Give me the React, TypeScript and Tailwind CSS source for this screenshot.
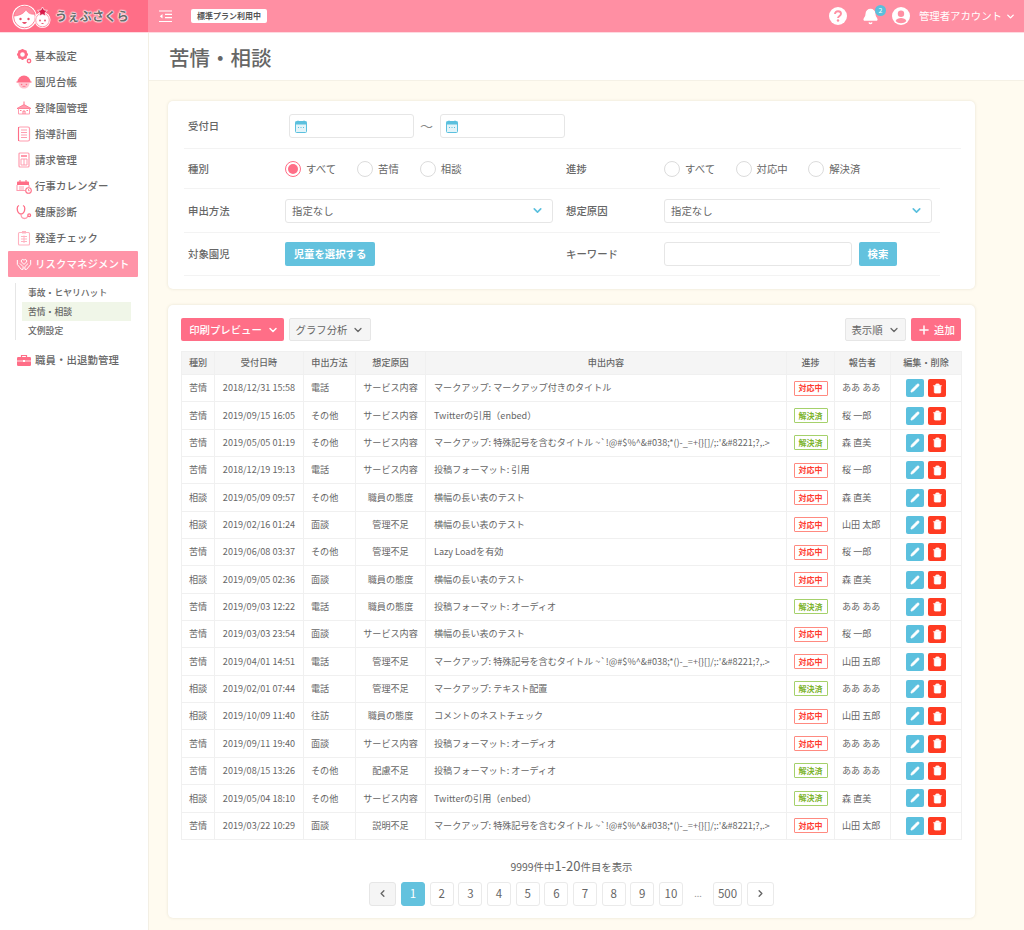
import { ChevronDown, ChevronLeft, ChevronRight, Bell, Pencil, Plus, Trash2 } from "lucide-react";
import type { ReactNode } from "react";

const PINK = "#ff6e87";

// sidebar icons, all drawn on a 16x16 box
const Gear = () => (
  <svg viewBox="0 0 16 16" className="w-4 h-4" fill="none" stroke={PINK}>
    <circle cx="6.5" cy="6.5" r="3.6" strokeWidth="2.6" />
    <path d="M6.5 1v1.5M6.5 10.5V12M1 6.5h1.5M10.5 6.5H12M2.6 2.6l1 1M9.4 9.4l1 1M2.6 10.4l1-1M9.4 3.6l1-1" strokeWidth="1.8" />
    <circle cx="13" cy="13" r="1.7" strokeWidth="1.4" />
  </svg>
);
const Kid = () => (
  <svg viewBox="0 0 16 16" className="w-4 h-4">
    <path d="M1.5 8a6.5 6.5 0 0 1 13 0z" fill={PINK} />
    <path d="M.5 8h15" stroke={PINK} strokeWidth="1.2" />
    <path d="M2.5 9c0 3.5 2.4 5.5 5.5 5.5s5.5-2 5.5-5.5z" fill="#ffc2cd" />
    <circle cx="5.6" cy="10.5" r=".8" fill={PINK} />
    <circle cx="10.4" cy="10.5" r=".8" fill={PINK} />
    <path d="M6.5 12.4h3" stroke={PINK} strokeWidth=".8" />
  </svg>
);
const School = () => (
  <svg viewBox="0 0 16 16" className="w-4 h-4" fill="none" stroke={PINK}>
    <path d="M8 1.5v3" strokeWidth="1" />
    <path d="M1 8.5 8 4.5l7 4z" fill="#ff9db0" strokeWidth=".8" />
    <path d="M2.5 8.5v5.5h11V8.5" stroke="#ff9db0" strokeWidth="1" />
    <path d="M7 14v-3h2v3M4 10.5h1.5M10.5 10.5H12" stroke={PINK} strokeWidth=".9" />
  </svg>
);
const Note = () => (
  <svg viewBox="0 0 16 16" className="w-4 h-4" fill="none" stroke="#ff9db0">
    <rect x="2.5" y="1" width="11" height="14" rx="1.5" strokeWidth="1.2" />
    <path d="M5 4h6M5 6.5h6M5 9h6M5 11.5h6" strokeWidth="1" />
    <path d="M2.5 1v14" stroke={PINK} strokeWidth="1" />
  </svg>
);
const Calc = () => (
  <svg viewBox="0 0 16 16" className="w-4 h-4" fill="none" stroke="#ff9db0">
    <rect x="3" y="1" width="10" height="14" rx="1" strokeWidth="1.2" />
    <path d="M5 4h6" stroke={PINK} strokeWidth="1.4" />
    <path d="M5 7h6M5 7v6M8 7v6M11 7v6M5 13h6" strokeWidth="1" />
  </svg>
);
const Cal = () => (
  <svg viewBox="0 0 16 16" className="w-4 h-4" fill="none" stroke="#ff9db0">
    <path d="M1 4.5a1 1 0 0 1 1-1h10a1 1 0 0 1 1 1V7H1z" fill={PINK} stroke="none" />
    <path d="M1 7v5.5h8M13 7v2" strokeWidth="1.1" />
    <path d="M4 2v2.500M10 2v2.500" stroke={PINK} strokeWidth="1.1" />
    <path d="M3 9h5M3 11h5" strokeWidth="1" />
    <circle cx="12.500" cy="12.500" r="2.800" stroke={PINK} strokeWidth="1.100" />
    <path d="M12.500 11v1.700h1.200" stroke={PINK} strokeWidth=".8" />
  </svg>
);
const Stetho = () => (
  <svg viewBox="0 0 16 16" className="w-4 h-4" fill="none" stroke={PINK} strokeWidth="1.300">
    <path d="M3 1.500c-1.300.5-1.800 1.500-1.800 3 0 3.500 2 5.500 3.800 5.500s3.800-2 3.800-5.500c0-1.500-.5-2.500-1.800-3" />
    <path d="M5 10c0 2.500 1 4.500 3.500 4.500S11.500 13 12 12" stroke="#ff9db0" />
    <circle cx="13.200" cy="11.200" r="1.400" />
  </svg>
);
const Check = () => (
  <svg viewBox="0 0 16 16" className="w-4 h-4" fill="none" stroke="#ffb3c1">
    <rect x="2.500" y="2.500" width="11" height="12.500" rx="1" strokeWidth="1.100" />
    <rect x="6" y="1" width="4" height="2.500" fill="#ffb3c1" stroke="none" />
    <path d="M5 6.500h6M5 9h6M5 11.500h6M8 5.500v7.500" strokeWidth="1" />
  </svg>
);
const Hands = () => (
  <svg viewBox="0 0 18 16" className="w-[18px] h-4" fill="none" stroke="#fff" strokeWidth="1.100">
    <path d="M9 8.500 6.300 5.800a1.700 1.700 0 0 1 2.400-2.400l.3.300.3-.3a1.700 1.700 0 0 1 2.400 2.400z" />
    <path d="M1.500 3.500v5l4.500 5.500h2V11L4.500 7.500M16.500 3.500v5L12 14h-2v-3l3.500-3.500" />
  </svg>
);
const Case = () => (
  <svg viewBox="0 0 16 16" className="w-4 h-4">
    <path d="M5.500 5V3.500h5V5" fill="none" stroke={PINK} strokeWidth="1.200" />
    <rect x="1" y="5" width="14" height="9" rx="1.200" fill={PINK} />
    <path d="M1 9h14" stroke="#fff" strokeWidth=".8" />
    <rect x="7" y="8" width="2" height="2" fill="#fff" />
  </svg>
);

const Logo = () => (
  <svg viewBox="0 0 39 27" className="w-[39px] h-[27px]">
    <circle cx="12.500" cy="14" r="12.300" fill="#fff" />
    <circle cx="12.500" cy="14" r="10.800" fill="#fff" stroke="#ff6e87" strokeWidth=".9" />
    <path d="M2 13C3 7 7 3.500 12.500 3.200 17.500 3.200 21.500 6.500 23 11c-4 .8-7.500-1-9-4.500C12.500 10 8 12.500 2 13z" fill="#ff8fa3" stroke="#ff6e87" strokeWidth=".7" />
    <circle cx="8.500" cy="16" r="1.200" fill="#e8506c" />
    <circle cx="16.500" cy="16" r="1.200" fill="#e8506c" />
    <path d="M10 19c1.400 2.500 3.600 2.500 5 0z" fill="#e8506c" />
    <circle cx="30.500" cy="17" r="8" fill="#fff" />
    <circle cx="30.500" cy="17" r="6.800" fill="#fff" stroke="#ff8fa3" strokeWidth=".9" />
    <circle cx="28" cy="17.500" r=".9" fill="#e8506c" />
    <circle cx="33" cy="17.500" r=".9" fill="#e8506c" />
    <path d="M29 20c1 1.200 2 1.200 3 0z" fill="#e8506c" />
    <path d="M30.500 4l1.600 3 3.300.4-2.400 2.300.6 3.300-3.100-1.600-3.100 1.600.6-3.300-2.400-2.300 3.300-.4z" fill="#d81b4a" stroke="#fff" strokeWidth=".7" />
  </svg>
);

const MenuToggle = () => (
  <svg viewBox="0 0 13 13" className="w-[13px] h-[13px]" fill="none" stroke="#fff" strokeWidth="1.200">
    <path d="M0 1h13M6 4.300h7M6 7.700h7M0 11.500h13" />
    <path d="M3.500 4 .8 6.200 3.500 8.400z" fill="#fff" stroke="none" />
  </svg>
);

const HelpIcon = () => (
  <svg viewBox="0 0 18 18" className="w-[18px] h-[18px]">
    <circle cx="9" cy="9" r="9" fill="#fff" />
    <path d="M6 7c0-1.800 1.300-2.800 3-2.800s3 1 3 2.500c0 2.200-3 2.200-3 4.300" fill="none" stroke="#ff8fa3" strokeWidth="1.900" />
    <circle cx="9" cy="13.500" r="1.200" fill="#ff8fa3" />
  </svg>
);

const UserIcon = () => (
  <svg viewBox="0 0 18 18" className="w-[18px] h-[18px]">
    <circle cx="9" cy="9" r="9" fill="#fff" />
    <circle cx="9" cy="6.800" r="3.200" fill="#ff8fa3" />
    <path d="M3.600 14c1-2 3-2.900 5.400-2.900s4.400.9 5.400 2.900C13 15.500 11.200 16.200 9 16.200S5 15.500 3.600 14z" fill="#ff8fa3" />
  </svg>
);

const Cell = ({ icon, label, active }: { icon: ReactNode; label: string; active?: boolean }) => (
  <div className={`ml-2 mr-[10px] flex h-[26px] items-center gap-[3px] pl-2 text-[10.400px] font-medium ${active ? "bg-[#ff94a8] text-white rounded-[1px] font-bold" : "text-[#666]"}`}>
    <span className="flex w-4 justify-center">{icon}</span>
    <span className="tracking-[0.1px]">{label}</span>
  </div>
);

const Sidebar = () => (
  <aside className="w-[149px] shrink-0 border-r border-[#f3efe4] bg-white pt-[10px]">
    <Cell icon={<Gear />} label="基本設定" />
    <Cell icon={<Kid />} label="園児台帳" />
    <Cell icon={<School />} label="登降園管理" />
    <Cell icon={<Note />} label="指導計画" />
    <Cell icon={<Calc />} label="請求管理" />
    <Cell icon={<Cal />} label="行事カレンダー" />
    <Cell icon={<Stetho />} label="健康診断" />
    <Cell icon={<Check />} label="発達チェック" />
    <Cell icon={<Hands />} label="リスクマネジメント" active />
    <div className="ml-[15px] mr-[17px] mt-[6px] border-l border-[#e6e6e6] pl-[6px] text-[8.800px] font-medium text-[#666]">
      <div className="flex h-[19px] items-center pl-[6px]">事故・ヒヤリハット</div>
      <div className="flex h-[19px] items-center bg-[#f0f6e8] pl-[6px]">苦情・相談</div>
      <div className="flex h-[19px] items-center pl-[6px]">文例設定</div>
    </div>
    <div className="mt-[7px]">
      <Cell icon={<Case />} label="職員・出退勤管理" />
    </div>
  </aside>
);

const Header = () => (
  <header className="flex h-[33px] border-b border-[#ffd9e0] bg-[#ff8fa3] text-white">
    <div className="flex w-[148px] items-center gap-[4px] bg-[#ff6e87] pl-[12px]">
      <Logo />
      <span className="text-[12.300px] font-bold text-[#6b6b6b] [text-shadow:0_0_1.5px_#fff,0_0_1.5px_#fff,0_0_1.5px_#fff,0_0_2px_#fff]">うぇぶさくら</span>
    </div>
    <div className="flex flex-1 items-center pl-[11px]">
      <MenuToggle />
      <span className="ml-[19px] rounded-[2px] bg-white px-[6px] py-[1px] text-[8px] font-bold text-[#555]">標準プラン利用中</span>
      <div className="ml-auto flex items-center pr-[8px]">
        <HelpIcon />
        <div className="relative ml-[15px]">
          <Bell size={17} fill="#fff" />
          <span className="absolute -right-[7px] -top-[3px] flex h-[11px] w-[11px] items-center justify-center rounded-full bg-[#5bbfdc] text-[7px]">2</span>
        </div>
        <span className="ml-[13px]"><UserIcon /></span>
        <span className="ml-[9px] text-[10.400px]">管理者アカウント</span>
        <ChevronDown size={11} strokeWidth={3} className="ml-[3px]" />
      </div>
    </div>
  </header>
);

const CalIcon = () => (
  <svg viewBox="0 0 12 13" className="w-[12px] h-[13px]">
    <rect x=".5" y="1.500" width="11" height="11" rx="1" fill="#e3f4f9" stroke="#5bc0de" />
    <rect x=".5" y="1.500" width="11" height="3" fill="#5bc0de" />
    <path d="M3 .5v2M9 .5v2" stroke="#5bc0de" />
    <path d="M3 7.500h1M5.500 7.500h1M8 7.500h1" stroke="#5bc0de" />
  </svg>
);

const DateBox = () => (
  <div className="flex h-[24px] w-[125px] items-center rounded-[3px] border border-[#e6e6e6] pl-[5px]">
    <CalIcon />
  </div>
);

const Radio = ({ label, on }: { label: string; on?: boolean }) => (
  <label className="flex items-center gap-[5px]">
    <span className={`flex h-[16px] w-[16px] items-center justify-center rounded-full border ${on ? "border-[#ff6e87]" : "border-[#dcdcdc]"}`}>
      {on && <span className="h-[10px] w-[10px] rounded-full bg-[#ff6e87]" />}
    </span>
    <span>{label}</span>
  </label>
);

const Sel = ({ w }: { w: string }) => (
  <div className={`flex h-[24px] items-center justify-between rounded-[3px] border border-[#e6e6e6] pl-[6px] pr-[8px] ${w}`}>
    <span className="text-[10.400px]">指定なし</span>
    <ChevronDown size={13} strokeWidth={3} className="text-[#5bc0de]" />
  </div>
);

const Filter = () => (
  <section className="rounded-[5px] bg-white pb-[13px] pl-[16px] pr-[35px] shadow-[0_0_3px_rgba(120,110,80,0.18)] text-[10.400px] text-[#666]">
    <div className="mr-[-21px] flex h-[48px] items-center border-b border-[#f3f3f3] pl-[4px] pt-[3px]">
      <span className="w-[101px] font-medium">受付日</span>
      <DateBox />
      <span className="mx-[6px] w-[14px] text-[13px] text-[#888]">～</span>
      <DateBox />
    </div>
    <div className="flex h-[40px] items-center border-b border-[#f3f3f3] pl-[4px]">
      <span className="w-[97px] font-medium">種別</span>
      <div className="flex w-[281px] gap-[21px]">
        <Radio label="すべて" on />
        <Radio label="苦情" />
        <Radio label="相談" />
      </div>
      <span className="w-[98px] font-medium">進捗</span>
      <div className="flex gap-[20.500px]">
        <Radio label="すべて" />
        <Radio label="対応中" />
        <Radio label="解決済" />
      </div>
    </div>
    <div className="flex h-[44px] items-center border-b border-[#f3f3f3] pl-[4px]">
      <span className="w-[97px] font-medium">申出方法</span>
      <Sel w="w-[268px]" />
      <span className="ml-[13px] w-[98px] font-medium">想定原因</span>
      <Sel w="w-[268px]" />
    </div>
    <div className="flex h-[43px] items-center border-b border-[#f3f3f3] pl-[4px]">
      <span className="w-[97px] font-medium">対象園児</span>
      <button className="h-[24px] w-[90px] rounded-[2px] bg-[#63c2de] font-bold text-white">児童を選択する</button>
      <span className="ml-[191px] w-[98px] font-medium">キーワード</span>
      <div className="h-[24px] w-[188px] rounded-[3px] border border-[#e6e6e6]" />
      <button className="ml-[7px] h-[24px] w-[38px] rounded-[2px] bg-[#63c2de] font-bold text-white">検索</button>
    </div>
  </section>
);

type Row = [string, string, string, string, string, 0 | 1, string];

const SPECIAL = "マークアップ: 特殊記号を含むタイトル ~`!@#$%^&#038;*()-_=+{}[]/;:'&#8221;?,.>";

const rows: Row[] = [
  ["苦情", "2018/12/31 15:58", "電話", "サービス内容", "マークアップ: マークアップ付きのタイトル", 0, "ああ ああ"],
  ["苦情", "2019/09/15 16:05", "その他", "サービス内容", "Twitterの引用（enbed）", 1, "桜 一郎"],
  ["苦情", "2019/05/05 01:19", "その他", "サービス内容", SPECIAL, 1, "森 直美"],
  ["苦情", "2018/12/19 19:13", "電話", "サービス内容", "投稿フォーマット: 引用", 0, "桜 一郎"],
  ["相談", "2019/05/09 09:57", "その他", "職員の態度", "横幅の長い表のテスト", 0, "森 直美"],
  ["相談", "2019/02/16 01:24", "面談", "管理不足", "横幅の長い表のテスト", 0, "山田 太郎"],
  ["苦情", "2019/06/08 03:37", "その他", "管理不足", "Lazy Loadを有効", 0, "桜 一郎"],
  ["相談", "2019/09/05 02:36", "面談", "職員の態度", "横幅の長い表のテスト", 0, "森 直美"],
  ["苦情", "2019/09/03 12:22", "電話", "職員の態度", "投稿フォーマット: オーディオ", 1, "ああ ああ"],
  ["苦情", "2019/03/03 23:54", "面談", "サービス内容", "横幅の長い表のテスト", 0, "桜 一郎"],
  ["苦情", "2019/04/01 14:51", "電話", "管理不足", SPECIAL, 0, "山田 五郎"],
  ["相談", "2019/02/01 07:44", "電話", "管理不足", "マークアップ: テキスト配置", 1, "ああ ああ"],
  ["相談", "2019/10/09 11:40", "往訪", "職員の態度", "コメントのネストチェック", 0, "山田 五郎"],
  ["苦情", "2019/09/11 19:40", "面談", "サービス内容", "投稿フォーマット: オーディオ", 0, "ああ ああ"],
  ["苦情", "2019/08/15 13:26", "その他", "配慮不足", "投稿フォーマット: オーディオ", 1, "ああ ああ"],
  ["相談", "2019/05/04 18:10", "その他", "サービス内容", "Twitterの引用（enbed）", 1, "森 直美"],
  ["苦情", "2019/03/22 10:29", "面談", "説明不足", SPECIAL, 0, "山田 太郎"],
];

const Status = ({ done }: { done: 0 | 1 }) => (
  <span className={`mx-auto flex h-[15px] w-[34px] items-center justify-center rounded-[1px] border text-[8px] font-bold ${done ? "border-[#a5d16b] text-[#7cb32c]" : "border-[#ff8a80] text-[#ff3b30]"}`}>
    {done ? "解決済" : "対応中"}
  </span>
);

const th = "border border-[#f0f0f0] font-medium text-[#666]";
const td = "border border-[#f0f0f0]";

const Table = () => (
  <table className="w-[780px] table-fixed border-collapse text-[9.100px] text-[#666]">
    <colgroup>
      <col className="w-[33px]" />
      <col className="w-[89px]" />
      <col className="w-[52px]" />
      <col className="w-[70px]" />
      <col className="w-[361px]" />
      <col className="w-[48px]" />
      <col className="w-[56px]" />
      <col className="w-[71px]" />
    </colgroup>
    <thead>
      <tr className="h-[23px] bg-[#f5f5f5]">
        <th className={th}>種別</th>
        <th className={th}>受付日時</th>
        <th className={th}>申出方法</th>
        <th className={th}>想定原因</th>
        <th className={th}>申出内容</th>
        <th className={th}>進捗</th>
        <th className={th}>報告者</th>
        <th className={th}>編集・削除</th>
      </tr>
    </thead>
    <tbody>
      {rows.map((r, i) => (
        <tr key={i} className="h-[27.350px]">
          <td className={`${td} text-center`}>{r[0]}</td>
          <td className={`${td} text-center`}>{r[1]}</td>
          <td className={`${td} pl-[7px]`}>{r[2]}</td>
          <td className={`${td} text-center`}>{r[3]}</td>
          <td className={`${td} pl-[8px] whitespace-nowrap`}>{r[4]}</td>
          <td className={td}><Status done={r[5]} /></td>
          <td className={`${td} pl-[7px]`}>{r[6]}</td>
          <td className={td}>
            <div className="flex justify-center gap-[4px]">
              <span className="flex h-[18px] w-[18px] items-center justify-center rounded-[2px] bg-[#5bc0de] text-white">
                <Pencil size={10} fill="#fff" strokeWidth={1.500} />
              </span>
              <span className="flex h-[18px] w-[18px] items-center justify-center rounded-[2px] bg-[#ff3b22] text-white">
                <Trash2 size={11} fill="#fff" strokeWidth={1.500} />
              </span>
            </div>
          </td>
        </tr>
      ))}
    </tbody>
  </table>
);

const pages = ["1", "2", "3", "4", "5", "6", "7", "8", "9", "10"];

const PageBox = ({ children, cls }: { children: ReactNode; cls: string }) => (
  <span className={`flex h-[24px] items-center justify-center rounded-[3px] border ${cls}`}>{children}</span>
);

const Pager = () => (
  <div className="mt-[18px] text-[#666]">
    <div className="text-center text-[10.400px] leading-[16px]">
      9999件中<span className="text-[13px]">1-20</span>件目を表示
    </div>
    <div className="mt-[7px] flex items-center justify-center text-[11.500px]">
      <PageBox cls="w-[27px] border-[#e6e6e6] bg-[#f5f5f5]"><ChevronLeft size={11} strokeWidth={3} /></PageBox>
      <div className="ml-[5px] flex gap-[4.670px]">
        {pages.map((p, i) => (
          <PageBox key={p} cls={`w-[24px] ${i === 0 ? "border-[#63c2de] bg-[#63c2de] text-white" : "border-[#eaeaea]"}`}>{p}</PageBox>
        ))}
      </div>
      <span className="w-[30px] text-center text-[9px] text-[#999]">...</span>
      <PageBox cls="w-[29px] border-[#eaeaea]">500</PageBox>
      <PageBox cls="ml-[5px] w-[27px] border-[#eaeaea]"><ChevronRight size={11} strokeWidth={3} /></PageBox>
    </div>
  </div>
);

const ListCard = () => (
  <section className="mt-[16px] h-[613px] rounded-[5px] bg-white px-[13px] pt-[13px] shadow-[0_0_3px_rgba(120,110,80,0.18)]">
    <div className="mb-[10px] flex h-[23px] items-stretch text-[10.400px]">
      <button className="flex w-[103px] items-center justify-center gap-[5px] rounded-[2px] bg-[#ff6e87] pl-[3px] font-medium text-white">
        印刷プレビュー <ChevronDown size={12} strokeWidth={3} />
      </button>
      <button className="ml-[5px] flex w-[82px] items-center justify-center gap-[5px] rounded-[2px] border border-[#e6e6e6] bg-[#f5f5f5] text-[#666]">
        グラフ分析 <ChevronDown size={12} strokeWidth={2.500} />
      </button>
      <button className="ml-auto flex w-[61px] items-center justify-center gap-[5px] rounded-[2px] border border-[#e6e6e6] bg-[#f5f5f5] text-[#666]">
        表示順 <ChevronDown size={12} strokeWidth={2.500} />
      </button>
      <button className="ml-[5px] mr-[1px] flex w-[50px] items-center justify-center gap-[3px] rounded-[2px] bg-[#ff6e87] font-medium text-white">
        <Plus size={14} strokeWidth={2.500} /> 追加
      </button>
    </div>
    <Table />
    <Pager />
  </section>
);

export default function App() {
  return (
    <div className="h-[930px] overflow-hidden bg-[#fffbf0] font-['Noto_Sans_CJK_JP','Noto_Sans',sans-serif]">
      <Header />
      <div className="flex h-[897px]">
        <Sidebar />
        <main className="flex-1">
          <div className="flex h-[48px] items-center border-b border-[#f5f1e6] bg-white pl-[20px] pt-[1px] text-[20.500px] font-medium text-[#666]">
            苦情・相談
          </div>
          <div className="ml-[19px] mr-[50px] mt-[20px]">
            <Filter />
            <ListCard />
          </div>
        </main>
      </div>
    </div>
  );
}
